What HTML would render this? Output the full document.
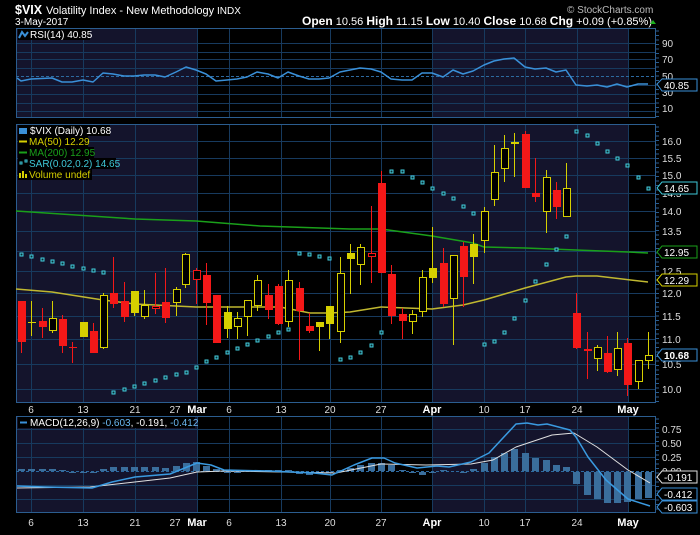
<!DOCTYPE html>
<html><head><meta charset="utf-8"><style>
html,body{margin:0;padding:0;background:#000;}
body{width:700px;height:530px;overflow:hidden;font-family:"Liberation Sans",Arial,sans-serif;}
svg text{font-family:"Liberation Sans",Arial,sans-serif;}
</style></head><body>
<svg id="s" width="700" height="530" viewBox="0 0 700 530" xmlns="http://www.w3.org/2000/svg">
<rect width="700" height="530" fill="#000"/>
<text x="15" y="14" fill="#fff" font-size="12.5" font-weight="bold">$VIX</text>
<text x="46" y="14" fill="#fff" font-size="11">Volatility Index - New Methodology</text>
<text x="217" y="14" fill="#fff" font-size="10">INDX</text>
<text x="15" y="25" fill="#fff" font-size="10">3-May-2017</text>
<text x="567" y="13" fill="#bbb" font-size="10">© StockCharts.com</text>
<text x="652" y="25" fill="#fff" font-size="11" text-anchor="end"><tspan font-weight="bold" font-size="12">Open</tspan> 10.56  <tspan font-weight="bold" font-size="12">High</tspan> 11.15  <tspan font-weight="bold" font-size="12">Low</tspan> 10.40  <tspan font-weight="bold" font-size="12">Close</tspan> 10.68  <tspan font-weight="bold" font-size="12">Chg</tspan> +0.09 (+0.85%)</text>
<polygon points="650,24 656,24 653,20" fill="#1db01d"/>
<g id="g"></g>
</svg>
<script>
var G=document.getElementById('g'),h='';
function r(x,y,w,ht,f,st,sw){h+='<rect x="'+x+'" y="'+y+'" width="'+w+'" height="'+ht+'" fill="'+f+'"'+(st?' stroke="'+st+'" stroke-width="'+(sw||1)+'"':'')+'/>';}
function l(x1,y1,x2,y2,c,w,d){h+='<line x1="'+x1+'" y1="'+y1+'" x2="'+x2+'" y2="'+y2+'" stroke="'+c+'" stroke-width="'+(w||1)+'"'+(d?' stroke-dasharray="'+d+'"':'')+'/>';}
function pl(p,c,w){h+='<polyline fill="none" stroke="'+c+'" stroke-width="'+(w||1)+'" stroke-linejoin="round" points="'+p+'"/>';}
function t(x,y,s,c,sz,a,b){h+='<text x="'+x+'" y="'+y+'" fill="'+c+'" font-size="'+(sz||10)+'"'+(a?' text-anchor="'+a+'"':'')+(b?' font-weight="bold"':'')+'>'+s+'</text>';}
var L=16,R=656,SH='#14142c',GR='#173a5e',BR='#2b5d8f';
var vx=[31,83,135,197,229,281,330,381,432,484,525,577,628];
function panel(y1,y2,hl){
 r(L,y1,R-L,y2-y1,'#000');
 r(L,y1,197-L,y2-y1,SH); r(432,y1,628-432,y2-y1,SH);
 vx.forEach(function(x){l(x+.5,y1,x+.5,y2,GR);});
 hl.forEach(function(y){l(L,y+.5,R,y+.5,GR);});
 r(L+.5,y1+.5,R-L-1,y2-y1-1,'none',BR);
 for(var y=y1+3;y<y2;y+=4.5)l(R,y,R+3,y,BR);
}
panel(28,118,[43,52,59,68,85,94,103,111]);
l(L,76.5,R,76.5,'#2d6aa0',1,'3,2');
[['90',43],['70',59],['50',76],['30',92],['10',108]].forEach(function(a){t(662,a[1]+4,a[0],'#ddd',10);});
pl('17,78 21,81 31,79 52,78 62,82 72,82 83,80 93,82 103,73 113,74 124,76 134,76 144,75 155,75 165,77 176,72 186,67 196,70 206,74 216,81 227,80 237,79 247,77 257,72 268,74 278,78 288,72 299,76 309,79 319,79 329,78 340,72 350,70 360,68 371,69 381,72 391,79 402,80 412,80 422,73 432,73 443,77 453,70 463,74 473,71 484,65 494,61 504,59 514,58 525,67 535,69 546,68 556,72 566,70 576,85 587,86 597,85 607,87 617,84 627,87 638,84 648,84','#3a90d8',1.5);
r(18,29,72,11,'#000'); t(30,38,'RSI(14) 40.85','#fff',10);
h+='<polyline points="19,38 22,32 25,36 28,32" fill="none" stroke="#3a90d8" stroke-width="2"/>';
h+='<polygon points="657,84 662,79 697,79 697,91 662,91" fill="#000" stroke="#3a90d8"/>';t(664,89,'40.85','#fff',10);
panel(124,403,[141,158,175,193,211,231,251,271,293,316,339,364,389]);
[['16.0',141],['15.5',158],['15.0',175],['14.5',193],['14.0',211],['13.5',231],['12.5',271],['12.0',293],['11.5',316],['11.0',339],['10.5',364],['10.0',389]].forEach(function(a){t(662,a[1]+4,a[0],'#ddd',10);});
pl('16,211 135,219 196,221 260,226 350,229 381,229 432,236 473,243 484,247 525,248 576,250 628,252 648,253','#1aa01a',1.5);
pl('16,289 52,292 103,300 135,304 196,307 280,307 310,313 330,313 350,312 381,307 432,309 463,305 484,300 525,288 566,277 576,276 597,276 648,282','#c0b830',1.5);
var C=[[21,301,342,301,353,'r',1],[31,322,323,301,336,'y',1],[42,321,327,308,338,'r',1],[52,318,331,301,333,'y',0],[62,319,346,315,353,'r',1],[72,347,348,342,363,'r',1],[83,322,337,322,337,'y',1],[93,331,353,323,353,'r',1],[103,295,348,293,349,'y',0],[113,293,304,257,308,'r',1],[124,301,317,282,322,'r',1],[134,291,313,291,316,'y',1],[144,305,317,290,319,'y',0],[155,306,309,273,314,'r',0],[165,302,318,268,323,'r',1],[176,289,303,287,316,'y',0],[185,254,285,253,288,'y',0],[196,270,280,268,304,'r',0],[206,275,303,263,325,'r',1],[216,295,343,295,343,'r',1],[227,312,329,306,338,'y',1],[237,318,327,312,339,'y',0],[247,300,317,300,336,'y',0],[257,280,306,275,311,'y',0],[268,295,310,284,319,'r',1],[278,286,324,284,325,'r',1],[288,280,322,270,327,'y',0],[299,288,311,282,360,'r',1],[309,326,331,313,333,'r',1],[319,322,327,322,351,'y',1],[329,306,324,306,339,'y',1],[340,273,332,257,343,'y',0],[350,253,259,244,294,'y',1],[360,247,265,244,285,'y',0],[371,253,257,206,283,'r',0],[381,183,273,171,273,'r',1],[391,274,316,265,324,'r',1],[402,314,321,308,339,'r',1],[412,314,322,310,334,'y',0],[422,277,312,270,317,'y',0],[432,268,278,227,283,'y',1],[443,263,304,248,307,'r',1],[453,255,299,255,345,'y',0],[463,246,277,242,307,'r',1],[473,244,257,234,284,'y',1],[484,211,241,207,253,'y',0],[494,172,200,145,206,'y',0],[504,148,169,135,182,'y',0],[514,142,144,133,177,'y',0],[525,134,188,131,188,'r',1],[535,193,197,158,202,'r',1],[546,177,212,170,233,'y',0],[556,190,207,182,219,'r',1],[566,188,217,163,217,'y',0],[576,313,348,293,349,'r',1],[587,349,351,332,379,'r',1],[597,347,359,345,371,'y',0],[607,353,372,336,373,'r',1],[617,348,370,332,376,'y',0],[627,343,385,338,396,'r',1],[638,360,382,360,389,'y',0],[648,355,361,332,369,'y',0]];
C.forEach(function(c){var col=c[5]=='r'?'#f41818':'#d6d000';var x=c[0];
 l(x+.5,c[3],x+.5,c[4],col,1);
 var bh=Math.max(1,c[2]-c[1]);
 if(c[6])r(x-3,c[1],8,bh,col);else{r(x-3,c[1],8,bh,'#000');r(x-2.5,c[1]+.5,7,bh-1,'none',col);}
});
var D=[[21,254],[31,256],[42,259],[52,261],[62,263],[72,266],[83,268],[93,270],[103,272],[113,392],[124,389],[134,386],[144,383],[155,380],[165,377],[176,374],[186,372],[196,367],[206,361],[216,357],[227,352],[237,348],[247,344],[257,340],[268,336],[278,332],[288,329],[299,253],[309,254],[319,256],[329,258],[340,359],[350,357],[360,352],[371,345],[381,332],[391,171],[402,171],[412,177],[422,182],[432,188],[443,193],[453,198],[463,206],[473,213],[484,344],[494,341],[504,332],[514,318],[525,300],[535,281],[546,264],[556,249],[566,236],[576,131],[587,135],[597,143],[607,151],[617,158],[627,165],[638,177],[648,188]];
D.forEach(function(d){r(d[0]-1,d[1]-1,3,3,'#0a2a30','#44d0e0');});
r(18,125,92,11,'#000');r(18,136,70,11,'#000');r(18,147,76,11,'#000');r(18,158,98,11,'#000');r(18,169,74,11,'#000');
h+='<rect x="19" y="128" width="8" height="6" fill="#3a90d8"/>';t(30,134,'$VIX (Daily) 10.68','#fff',10);
l(19,141.5,27,141.5,'#d6d000',2);t(29,145,'MA(50) 12.29','#d6d000',10);
l(19,152.5,27,152.5,'#1aa01a',2);t(29,156,'MA(200) 12.95','#1aa01a',10);
r(20,162,2,2,'none','#3ec8d8');r(25,160,2,2,'none','#3ec8d8');t(29,167,'SAR(0.02,0.2) 14.65','#3ec8d8',10);
h+='<rect x="19" y="173" width="2" height="5" fill="#d6d000"/><rect x="22" y="171" width="2" height="7" fill="#d6d000"/><rect x="25" y="174" width="2" height="4" fill="#d6d000"/>';t(29,178,'Volume undef','#d6d000',10);
function badge(y,txt,bc,b){h+='<polygon points="657,'+y+' 662,'+(y-6)+' 697,'+(y-6)+' 697,'+(y+6)+' 662,'+(y+6)+'" fill="#000" stroke="'+bc+'"/>';t(664,y+4,txt,'#fff',10,0,b);}
badge(188,'14.65','#3ec8d8');badge(252,'12.95','#1aa01a');badge(280,'12.29','#d6d000');badge(355,'10.68','#3a90d8',1);
function dates(y){[['6',31],['13',83],['21',135],['27',175],['Mar',197,1],['6',229],['13',281],['20',330],['27',381],['Apr',432,1],['10',484],['17',525],['24',577],['May',628,1]].forEach(function(a){t(a[1],y,a[0],a[2]?'#fff':'#ddd',a[2]?11:10,'middle',a[2]);});}
dates(413);dates(526);
panel(416,513,[429,443,457,485,499]);
l(L,471.5,R,471.5,'#2d6aa0',1,'3,2');
[['0.75',429],['0.50',443],['0.25',457],['0.00',471]].forEach(function(a){t(662,a[1]+4,a[0],'#ddd',10);});
var H={21:2,31:2,42:2,52:2,62:1,72:-1,83:-1,93:-1,103:2,113:4,124:4,134:4,144:4,155:4,165:3,176:5,186:8,196:9,206:5,216:2,227:-1,237:-1,247:0,257:1,268:1,278:1,288:1,299:-2,309:-3,319:-2,329:-1,340:1,350:3,360:6,371:8,381:8,391:6,402:1,412:-1,422:-3,432:-1,443:1,453:0,463:-1,473:2,484:8,494:14,504:18,514:22,525:18,535:13,546:11,556:6,566:4,576:-12,587:-23,597:-27,607:-31,617:-31,627:-30,638:-27,648:-26};
for(var k in H){var v=H[k];if(v>0)r(+k-3,471-v,7,v,'#3a6e9c');else if(v<0)r(+k-3,472,7,-v,'#3a6e9c');}
pl('17,488 90,487 170,478 197,472 224,471 336,473 381,464 426,465 471,464 493,460 516,447 552,435 574,433 597,447 628,470 650,483','#e0e0e0',1);
pl('17,486 45,487 92,488 112,482 135,477 170,474 197,463 211,465 224,470 269,471 314,473 332,475 354,465 372,458 384,458 395,463 417,468 437,466 449,467 471,462 489,453 516,424 527,423 538,425 547,424 570,430 576,437 588,457 606,480 628,499 650,506','#3a9ae0',1.5);
r(18,417,177,11,'#000');l(20,422.5,27,422.5,'#3a90d8',2);
h+='<text x="30" y="426" font-size="10" fill="#fff">MACD(12,26,9) <tspan fill="#6ab8f0">-0.603</tspan>, -0.191, <tspan fill="#6ab8f0">-0.412</tspan></text>';
h+='<polygon points="657,477 662,471 697,471 697,483 662,483" fill="#000" stroke="#e0e0e0"/>';t(664,481,'-0.191','#fff',10);
h+='<polygon points="657,494 662,488 697,488 697,500 662,500" fill="#000" stroke="#3a90d8"/>';t(664,498,'-0.412','#fff',10);
h+='<polygon points="657,507 662,501 697,501 697,513 662,513" fill="#000" stroke="#3a90d8"/>';t(664,511,'-0.603','#fff',10);
G.innerHTML=h;
</script>
</body></html>
